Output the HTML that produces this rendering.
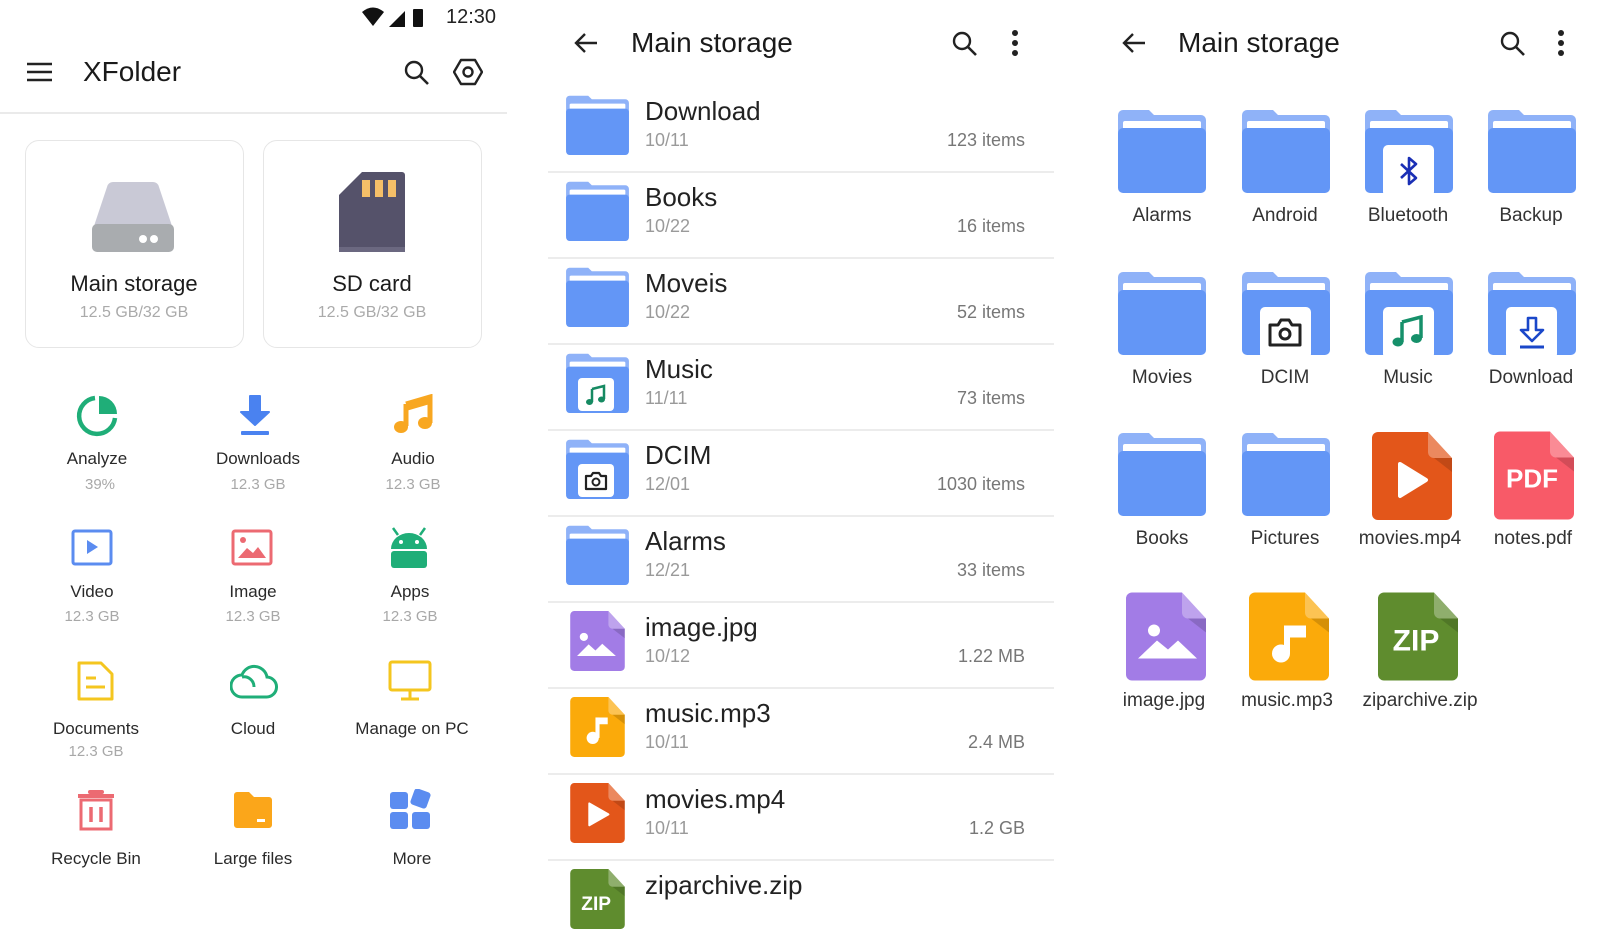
<!DOCTYPE html>
<html><head><meta charset="utf-8">
<style>
*{margin:0;padding:0;box-sizing:border-box}
body{width:1600px;height:900px;background:#fff;position:relative;overflow:hidden;font-family:"Liberation Sans",Arial,sans-serif;color:#222}
.a{position:absolute}
.c{position:absolute;text-align:center;transform:translateX(-50%);white-space:nowrap}
.lbl{font-size:17px;color:#2a2a2a}
.sub{font-size:15px;color:#a8a8a8}
.card{position:absolute;top:140px;width:219px;height:208px;border:1.5px solid #e6e6e6;border-radius:14px}
.nm{position:absolute;left:645px;font-size:26px;color:#222}
.dt{position:absolute;left:645px;font-size:18px;color:#9a9a9a}
.rt{position:absolute;right:575px;font-size:18px;color:#777;text-align:right}
.hr{position:absolute;left:548px;width:506px;height:2px;background:#ececec}
.gl{font-size:19px;color:#333}
</style></head><body>
<svg width="0" height="0" style="position:absolute">
<defs>
<symbol id="fold" viewBox="0 0 88 84" overflow="visible">
<path d="M0 6a5 5 0 0 1 5-5h26l5 5h47a5 5 0 0 1 5 5v66H0z" fill="#8fb2f8"/>
<rect x="5" y="12" width="78" height="9" rx="2" fill="#fff"/>
<rect x="0" y="19" width="88" height="65" rx="5" fill="#6396f6"/>
</symbol>
<symbol id="file" viewBox="0 0 80 88" overflow="visible">
<path d="M6 0h50l24 26v56a6 6 0 0 1-6 6H6a6 6 0 0 1-6-6V6a6 6 0 0 1 6-6z" fill="currentColor"/>
<path d="M56 0l24 26H62a6 6 0 0 1-6-6z" fill="#fff" opacity=".3"/>
<path d="M62 26h18v14z" fill="#000" opacity=".15"/>
</symbol>
</defs>
</svg>

<!-- LEFT PANEL -->
<svg class="a" style="left:360px;top:7px" width="70" height="22" viewBox="0 0 70 22">
<path d="M2 5q11-9 22 0l-11 14z" fill="#111"/>
<path d="M29 20l16-16v16z" fill="#111"/>
<rect x="53" y="2" width="10" height="18" rx="1" fill="#111"/>
</svg>
<div class="a" style="left:446px;top:6px;font-size:20px;color:#222">12:30</div>

<svg class="a" style="left:26px;top:61px" width="28" height="22" viewBox="0 0 28 22"><path d="M1 3h25M1 11h25M1 19h25" stroke="#222" stroke-width="2.4"/></svg>
<div class="a" style="left:83px;top:56px;font-size:28px;color:#1a1a1a">XFolder</div>
<svg class="a" style="left:403px;top:59px" width="28" height="28" viewBox="0 0 28 28"><circle cx="11" cy="11" r="8" fill="none" stroke="#222" stroke-width="2.4"/><path d="M17 17l8 8" stroke="#222" stroke-width="2.6"/></svg>
<svg class="a" style="left:453px;top:58px" width="30" height="28" viewBox="0 0 30 28"><path d="M8 2h14l7 12-7 12H8L1 14z" fill="none" stroke="#222" stroke-width="2.4" stroke-linejoin="round"/><circle cx="15" cy="14" r="4.5" fill="none" stroke="#222" stroke-width="2.4"/></svg>
<div class="a" style="left:0;top:112px;width:507px;height:2px;background:#eaeaea"></div>

<div class="card" style="left:25px"></div>
<div class="card" style="left:263px"></div>
<svg class="a" style="left:91px;top:181px" width="84" height="72" viewBox="0 0 84 72">
<path d="M16 6a6 6 0 0 1 6-5h40a6 6 0 0 1 6 5l14 42H2z" fill="#c9c9d6"/>
<rect x="1" y="43" width="82" height="28" rx="5" fill="#a9acaf"/>
<circle cx="52" cy="58" r="4" fill="#fff"/><circle cx="63" cy="58" r="4" fill="#fff"/>
</svg>
<svg class="a" style="left:338px;top:171px" width="68" height="82" viewBox="0 0 68 82">
<path d="M24 1h40a3 3 0 0 1 3 3v77H1V24z" fill="#55526a"/>
<rect x="1" y="76" width="66" height="5" fill="#6b6880"/>
<rect x="24" y="9" width="8" height="17" fill="#f5bf68"/><rect x="37" y="9" width="8" height="17" fill="#f5bf68"/><rect x="50" y="9" width="8" height="17" fill="#f5bf68"/>
</svg>
<div class="c" style="left:134px;top:271px;font-size:22px;color:#1c1c1c">Main storage</div>
<div class="c" style="left:134px;top:304px;font-size:16px;color:#aaa">12.5 GB/32 GB</div>
<div class="c" style="left:372px;top:271px;font-size:22px;color:#1c1c1c">SD card</div>
<div class="c" style="left:372px;top:304px;font-size:16px;color:#aaa">12.5 GB/32 GB</div>

<!-- grid icons row1 -->
<svg class="a" style="left:75px;top:394px" width="44" height="44" viewBox="0 0 44 44"><path d="M20 4A18 18 0 1 0 40 24" fill="none" stroke="#1fae78" stroke-width="4.5"/><path d="M24 2a18 18 0 0 1 18 18H24z" fill="#1fae78"/></svg>
<svg class="a" style="left:238px;top:394px" width="34" height="42" viewBox="0 0 34 42"><path d="M12 2h10v16h9L17 31 3 18h9z" fill="#4a82f0" stroke="#4a82f0" stroke-width="2" stroke-linejoin="round"/><rect x="3" y="37" width="28" height="4" rx="1" fill="#4a82f0"/></svg>
<svg class="a" style="left:392px;top:394px" width="42" height="42" viewBox="0 0 42 42"><path d="M14 10L38 3v26" fill="none" stroke="#f8a721" stroke-width="5"/><path d="M14 10v22" stroke="#f8a721" stroke-width="5"/><ellipse cx="9" cy="33" rx="7" ry="6" fill="#f8a721"/><ellipse cx="33" cy="29" rx="7" ry="6" fill="#f8a721"/><path d="M14 10L38 3v7L14 17z" fill="#f8a721"/></svg>
<div class="c lbl" style="left:97px;top:449px">Analyze</div><div class="c sub" style="left:100px;top:476px">39%</div>
<div class="c lbl" style="left:258px;top:449px">Downloads</div><div class="c sub" style="left:258px;top:476px">12.3 GB</div>
<div class="c lbl" style="left:413px;top:449px">Audio</div><div class="c sub" style="left:413px;top:476px">12.3 GB</div>
<!-- row2 -->
<svg class="a" style="left:71px;top:529px" width="42" height="38" viewBox="0 0 42 38"><rect x="2" y="2" width="38" height="33" rx="2" fill="none" stroke="#5b8cf0" stroke-width="3"/><path d="M16 11l11 7-11 7z" fill="#5b8cf0"/></svg>
<svg class="a" style="left:231px;top:529px" width="42" height="38" viewBox="0 0 42 38"><rect x="2" y="2" width="38" height="33" rx="2" fill="none" stroke="#ec6a72" stroke-width="3"/><circle cx="12" cy="11" r="3" fill="#ec6a72"/><path d="M7 29l9-10 6 5 5-6 8 11z" fill="#ec6a72"/></svg>
<svg class="a" style="left:389px;top:527px" width="40" height="42" viewBox="0 0 40 42"><path d="M4 1l5 7M36 1l-5 7" stroke="#1fae78" stroke-width="2.5"/><path d="M2 22a18 16 0 0 1 36 0z" fill="#1fae78"/><rect x="2" y="24" width="36" height="17" rx="3" fill="#1fae78"/><circle cx="12" cy="15" r="2" fill="#fff"/><circle cx="28" cy="15" r="2" fill="#fff"/></svg>
<div class="c lbl" style="left:92px;top:582px">Video</div><div class="c sub" style="left:92px;top:608px">12.3 GB</div>
<div class="c lbl" style="left:253px;top:582px">Image</div><div class="c sub" style="left:253px;top:608px">12.3 GB</div>
<div class="c lbl" style="left:410px;top:582px">Apps</div><div class="c sub" style="left:410px;top:608px">12.3 GB</div>
<!-- row3 -->
<svg class="a" style="left:76px;top:660px" width="40" height="42" viewBox="0 0 40 42"><path d="M3 3h22l11 11v25H3z" fill="none" stroke="#f4c61f" stroke-width="3" stroke-linejoin="round"/><path d="M10 18h10M10 27h19" stroke="#f4c61f" stroke-width="3"/></svg>
<svg class="a" style="left:230px;top:662px" width="48" height="38" viewBox="0 0 48 38"><path d="M12 35h24a10 10 0 0 0 1-20 13 13 0 0 0-25-2A11 11 0 0 0 12 35z" fill="none" stroke="#1fae78" stroke-width="3"/><path d="M12 15a10 10 0 0 1 12 10" fill="none" stroke="#1fae78" stroke-width="3"/></svg>
<svg class="a" style="left:388px;top:660px" width="44" height="42" viewBox="0 0 44 42"><rect x="2" y="2" width="40" height="28" rx="2" fill="none" stroke="#f4c61f" stroke-width="3"/><path d="M22 30v8M13 39h18" stroke="#f4c61f" stroke-width="3"/></svg>
<div class="c lbl" style="left:96px;top:719px">Documents</div><div class="c sub" style="left:96px;top:743px">12.3 GB</div>
<div class="c lbl" style="left:253px;top:719px">Cloud</div>
<div class="c lbl" style="left:412px;top:719px">Manage on PC</div>
<!-- row4 -->
<svg class="a" style="left:76px;top:789px" width="40" height="42" viewBox="0 0 40 42"><path d="M14 3h12" stroke="#ec6a72" stroke-width="4" stroke-linecap="round"/><path d="M2 7h36" stroke="#ec6a72" stroke-width="4"/><rect x="5" y="11" width="30" height="29" fill="none" stroke="#ec6a72" stroke-width="3"/><path d="M15 18v15M25 18v15" stroke="#ec6a72" stroke-width="3.5"/></svg>
<svg class="a" style="left:232px;top:791px" width="42" height="38" viewBox="0 0 42 38"><path d="M2 4a3 3 0 0 1 3-3h12l5 5h15a3 3 0 0 1 3 3v25a3 3 0 0 1-3 3H5a3 3 0 0 1-3-3z" fill="#fba61a"/><rect x="25" y="28" width="8" height="3" fill="#fff"/></svg>
<svg class="a" style="left:389px;top:789px" width="44" height="42" viewBox="0 0 44 42"><rect x="1" y="3" width="18" height="17" rx="3" fill="#5b8cf0"/><rect x="23" y="1" width="17" height="17" rx="3" fill="#5b8cf0" transform="rotate(20 31.5 9.5)"/><rect x="1" y="23" width="18" height="17" rx="3" fill="#5b8cf0"/><rect x="23" y="23" width="18" height="17" rx="3" fill="#5b8cf0"/></svg>
<div class="c lbl" style="left:96px;top:849px">Recycle Bin</div>
<div class="c lbl" style="left:253px;top:849px">Large files</div>
<div class="c lbl" style="left:412px;top:849px">More</div>

<!-- MIDDLE PANEL -->
<svg class="a" style="left:573px;top:31px" width="26" height="24" viewBox="0 0 26 24"><path d="M24 12H3M12 3l-9 9 9 9" fill="none" stroke="#222" stroke-width="2.4"/></svg>
<div class="a" style="left:631px;top:27px;font-size:28px;color:#1a1a1a">Main storage</div>
<svg class="a" style="left:951px;top:30px" width="28" height="28" viewBox="0 0 28 28"><circle cx="11" cy="11" r="8" fill="none" stroke="#222" stroke-width="2.4"/><path d="M17 17l8 8" stroke="#222" stroke-width="2.6"/></svg>
<svg class="a" style="left:1010px;top:29px" width="10" height="28" viewBox="0 0 10 28"><circle cx="5" cy="4" r="3" fill="#222"/><circle cx="5" cy="14" r="3" fill="#222"/><circle cx="5" cy="24" r="3" fill="#222"/></svg>

<!-- rows: pitch 86 -->
<svg class="a" style="left:566px;top:95px" width="63" height="60"><use href="#fold"/></svg>
<div class="nm" style="top:96px">Download</div><div class="dt" style="top:130px">10/11</div><div class="rt" style="top:130px">123 items</div>
<div class="hr" style="top:171px"></div>
<svg class="a" style="left:566px;top:181px" width="63" height="60"><use href="#fold"/></svg>
<div class="nm" style="top:182px">Books</div><div class="dt" style="top:216px">10/22</div><div class="rt" style="top:216px">16 items</div>
<div class="hr" style="top:257px"></div>
<svg class="a" style="left:566px;top:267px" width="63" height="60"><use href="#fold"/></svg>
<div class="nm" style="top:268px">Moveis</div><div class="dt" style="top:302px">10/22</div><div class="rt" style="top:302px">52 items</div>
<div class="hr" style="top:343px"></div>
<svg class="a" style="left:566px;top:353px" width="63" height="60"><use href="#fold"/></svg>
<div class="a" style="left:578px;top:378px;width:36px;height:33px;background:#fff;border-radius:4px"></div>
<svg class="a" style="left:585px;top:384px" width="22" height="22" viewBox="0 0 22 22"><path d="M7 5l12-3v13" fill="none" stroke="#168a62" stroke-width="2.5"/><path d="M7 5v13" stroke="#168a62" stroke-width="2.5"/><ellipse cx="4.5" cy="18" rx="3.5" ry="3" fill="#168a62"/><ellipse cx="16.5" cy="15.5" rx="3.5" ry="3" fill="#168a62"/></svg>
<div class="nm" style="top:354px">Music</div><div class="dt" style="top:388px">11/11</div><div class="rt" style="top:388px">73 items</div>
<div class="hr" style="top:429px"></div>
<svg class="a" style="left:566px;top:439px" width="63" height="60"><use href="#fold"/></svg>
<div class="a" style="left:578px;top:464px;width:36px;height:33px;background:#fff;border-radius:4px"></div>
<svg class="a" style="left:584px;top:471px" width="24" height="20" viewBox="0 0 24 20"><path d="M2 5h5l2-3h6l2 3h5v13H2z" fill="none" stroke="#222" stroke-width="2.2" stroke-linejoin="round"/><circle cx="12" cy="11" r="3.5" fill="none" stroke="#222" stroke-width="2"/></svg>
<div class="nm" style="top:440px">DCIM</div><div class="dt" style="top:474px">12/01</div><div class="rt" style="top:474px">1030 items</div>
<div class="hr" style="top:515px"></div>
<svg class="a" style="left:566px;top:525px" width="63" height="60"><use href="#fold"/></svg>
<div class="nm" style="top:526px">Alarms</div><div class="dt" style="top:560px">12/21</div><div class="rt" style="top:560px">33 items</div>
<div class="hr" style="top:601px"></div>
<svg class="a" style="left:569px;top:611px;color:#a27ce6" width="57" height="60" viewBox="0 0 80 88"><use href="#file"/><circle cx="20" cy="38" r="6" fill="#fff"/><path d="M10 66l17-17 10 9 10-10 20 18z" fill="#fff"/></svg>
<div class="nm" style="top:612px">image.jpg</div><div class="dt" style="top:646px">10/12</div><div class="rt" style="top:646px">1.22 MB</div>
<div class="hr" style="top:687px"></div>
<svg class="a" style="left:569px;top:697px;color:#fbaa0a" width="57" height="60" viewBox="0 0 80 88"><use href="#file"/><path d="M40 30v30" stroke="#fff" stroke-width="6"/><path d="M37 30h18v10H43z" fill="#fff"/><circle cx="33" cy="60" r="9" fill="#fff"/></svg>
<div class="nm" style="top:698px">music.mp3</div><div class="dt" style="top:732px">10/11</div><div class="rt" style="top:732px">2.4 MB</div>
<div class="hr" style="top:773px"></div>
<svg class="a" style="left:569px;top:783px;color:#e3561a" width="57" height="60" viewBox="0 0 80 88"><use href="#file"/><path d="M28 30l28 16-28 16z" fill="#fff" stroke="#fff" stroke-width="3" stroke-linejoin="round"/></svg>
<div class="nm" style="top:784px">movies.mp4</div><div class="dt" style="top:818px">10/11</div><div class="rt" style="top:818px">1.2 GB</div>
<div class="hr" style="top:859px"></div>
<svg class="a" style="left:569px;top:869px;color:#5f8c2e" width="57" height="60" viewBox="0 0 80 88"><use href="#file"/><text x="38" y="60" text-anchor="middle" font-family="Liberation Sans" font-weight="bold" font-size="28" fill="#fff">ZIP</text></svg>
<div class="nm" style="top:870px">ziparchive.zip</div>

<!-- RIGHT PANEL -->
<svg class="a" style="left:1121px;top:31px" width="26" height="24" viewBox="0 0 26 24"><path d="M24 12H3M12 3l-9 9 9 9" fill="none" stroke="#222" stroke-width="2.4"/></svg>
<div class="a" style="left:1178px;top:27px;font-size:28px;color:#1a1a1a">Main storage</div>
<svg class="a" style="left:1499px;top:30px" width="28" height="28" viewBox="0 0 28 28"><circle cx="11" cy="11" r="8" fill="none" stroke="#222" stroke-width="2.4"/><path d="M17 17l8 8" stroke="#222" stroke-width="2.6"/></svg>
<svg class="a" style="left:1556px;top:29px" width="10" height="28" viewBox="0 0 10 28"><circle cx="5" cy="4" r="3" fill="#222"/><circle cx="5" cy="14" r="3" fill="#222"/><circle cx="5" cy="24" r="3" fill="#222"/></svg>

<!-- row1 -->
<svg class="a" style="left:1118px;top:109px" width="88" height="84"><use href="#fold"/></svg>
<svg class="a" style="left:1242px;top:109px" width="88" height="84"><use href="#fold"/></svg>
<svg class="a" style="left:1365px;top:109px" width="88" height="84"><use href="#fold"/></svg>
<svg class="a" style="left:1488px;top:109px" width="88" height="84"><use href="#fold"/></svg>
<div class="a" style="left:1383px;top:145px;width:51px;height:52px;background:#fff;border-radius:5px"></div>
<svg class="a" style="left:1394px;top:155px" width="30" height="32" viewBox="0 0 30 32"><path d="M7 9l15 14-7 6V3l7 6L7 23" fill="none" stroke="#1a2fb5" stroke-width="2.6" stroke-linejoin="round"/></svg>
<div class="c gl" style="left:1162px;top:205px">Alarms</div>
<div class="c gl" style="left:1285px;top:205px">Android</div>
<div class="c gl" style="left:1408px;top:205px">Bluetooth</div>
<div class="c gl" style="left:1531px;top:205px">Backup</div>
<!-- row2 -->
<svg class="a" style="left:1118px;top:271px" width="88" height="84"><use href="#fold"/></svg>
<svg class="a" style="left:1242px;top:271px" width="88" height="84"><use href="#fold"/></svg>
<svg class="a" style="left:1365px;top:271px" width="88" height="84"><use href="#fold"/></svg>
<svg class="a" style="left:1488px;top:271px" width="88" height="84"><use href="#fold"/></svg>
<div class="a" style="left:1260px;top:307px;width:51px;height:52px;background:#fff;border-radius:5px"></div>
<div class="a" style="left:1383px;top:307px;width:51px;height:52px;background:#fff;border-radius:5px"></div>
<div class="a" style="left:1506px;top:307px;width:51px;height:52px;background:#fff;border-radius:5px"></div>
<svg class="a" style="left:1267px;top:317px" width="36" height="32" viewBox="0 0 36 32"><path d="M3 8h8l3-5h8l3 5h8v20H3z" fill="none" stroke="#222" stroke-width="3" stroke-linejoin="round"/><circle cx="18" cy="17" r="5" fill="none" stroke="#222" stroke-width="3"/></svg>
<svg class="a" style="left:1391px;top:315px" width="34" height="34" viewBox="0 0 34 34"><path d="M11 7l19-5v21" fill="none" stroke="#16906a" stroke-width="3.5"/><path d="M11 7v20" stroke="#16906a" stroke-width="3.5"/><ellipse cx="7" cy="27" rx="5.5" ry="4.5" fill="#16906a"/><ellipse cx="25.5" cy="23.5" rx="5.5" ry="4.5" fill="#16906a"/></svg>
<svg class="a" style="left:1517px;top:316px" width="30" height="34" viewBox="0 0 30 34"><path d="M11 2h8v12h7L15 25 4 14h7z" fill="none" stroke="#1a47c9" stroke-width="2.6" stroke-linejoin="round"/><path d="M3 31h24" stroke="#1a47c9" stroke-width="3"/></svg>
<div class="c gl" style="left:1162px;top:367px">Movies</div>
<div class="c gl" style="left:1285px;top:367px">DCIM</div>
<div class="c gl" style="left:1408px;top:367px">Music</div>
<div class="c gl" style="left:1531px;top:367px">Download</div>
<!-- row3 -->
<svg class="a" style="left:1118px;top:432px" width="88" height="84"><use href="#fold"/></svg>
<svg class="a" style="left:1242px;top:432px" width="88" height="84"><use href="#fold"/></svg>
<svg class="a" style="left:1372px;top:432px;color:#e3561a" width="80" height="88" viewBox="0 0 80 88"><use href="#file"/><path d="M28 32l26 16-26 16z" fill="#fff" stroke="#fff" stroke-width="4" stroke-linejoin="round"/></svg>
<svg class="a" style="left:1494px;top:431px;color:#f85a68" width="80" height="89" viewBox="0 0 80 88"><use href="#file"/><text x="38" y="56" text-anchor="middle" font-family="Liberation Sans" font-weight="bold" font-size="26" fill="#fff">PDF</text></svg>
<div class="c gl" style="left:1162px;top:528px">Books</div>
<div class="c gl" style="left:1285px;top:528px">Pictures</div>
<div class="c gl" style="left:1410px;top:528px">movies.mp4</div>
<div class="c gl" style="left:1533px;top:528px">notes.pdf</div>
<!-- row4 -->
<svg class="a" style="left:1126px;top:592px;color:#a27ce6" width="80" height="89" viewBox="0 0 80 88"><use href="#file"/><circle cx="28" cy="38" r="6" fill="#fff"/><path d="M12 66l19-18 11 9 10-9 19 18z" fill="#fff"/></svg>
<svg class="a" style="left:1249px;top:592px;color:#fbaa0a" width="80" height="89" viewBox="0 0 80 88"><use href="#file"/><path d="M38 33v28" stroke="#fff" stroke-width="6"/><path d="M35 33h22v12H41z" fill="#fff"/><circle cx="32" cy="61" r="9" fill="#fff"/></svg>
<svg class="a" style="left:1378px;top:592px;color:#5f8c2e" width="80" height="89" viewBox="0 0 80 88"><use href="#file"/><text x="38" y="58" text-anchor="middle" font-family="Liberation Sans" font-weight="bold" font-size="30" fill="#fff">ZIP</text></svg>
<div class="c gl" style="left:1164px;top:690px">image.jpg</div>
<div class="c gl" style="left:1287px;top:690px">music.mp3</div>
<div class="c gl" style="left:1420px;top:690px">ziparchive.zip</div>
</body></html>
